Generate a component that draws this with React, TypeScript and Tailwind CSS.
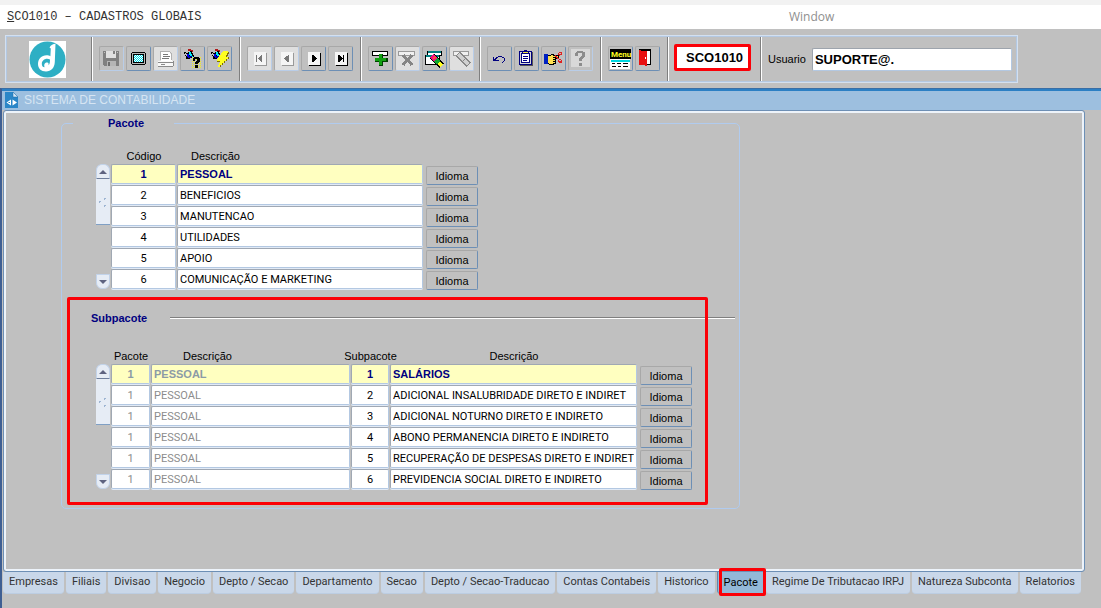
import type { ReactNode } from 'react'

const pacotes = ['PESSOAL', 'BENEFICIOS', 'MANUTENCAO', 'UTILIDADES', 'APOIO', 'COMUNICAÇÃO E MARKETING']

const subpacotes = [
  'SALÁRIOS',
  'ADICIONAL INSALUBRIDADE DIRETO E INDIRET',
  'ADICIONAL NOTURNO DIRETO E INDIRETO',
  'ABONO PERMANENCIA DIRETO E INDIRETO',
  'RECUPERAÇÃO DE DESPESAS DIRETO E INDIRET',
  'PREVIDENCIA SOCIAL DIRETO E INDIRETO',
]

const tabs = [
  'Empresas',
  'Filiais',
  'Divisao',
  'Negocio',
  'Depto / Secao',
  'Departamento',
  'Secao',
  'Depto / Secao-Traducao',
  'Contas Contabeis',
  'Historico',
  'Pacote',
  'Regime De Tributacao IRPJ',
  'Natureza Subconta',
  'Relatorios',
]

function Logo() {
  return (
    <svg viewBox="0 0 37 37" className="h-[37px] w-[37px] bg-white" aria-hidden="true">
      <circle cx="18.5" cy="18.5" r="18" fill="#2eafc4" />
      <path
        d="M20.500 6.500C22 4 24 3 26.500 2.800L25.800 21C25.500 27 22 30.500 17 30.500C12 30.500 9 27.500 9 23C9 18 12.500 14.200 17.500 14.200C19 14.200 20.500 14.600 21.400 15.200L21.800 7.500Z"
        fill="#fff"
      />
      <path
        d="M21 18.500C17 16.500 12.800 19 12.800 23C12.800 25 14 26.300 15.600 26.300C14.600 23.500 16 21.500 18.300 21.600C19.600 21.700 20 23 19.300 24.200C21 23.200 21 20.500 21 18.500Z"
        fill="#2eafc4"
      />
    </svg>
  )
}

function ToolButton({
  label,
  disabled = false,
  light = false,
  children,
}: {
  label: string
  disabled?: boolean
  light?: boolean
  children: ReactNode
}) {
  return (
    <button
      type="button"
      aria-label={label}
      disabled={disabled}
      className={`h-[25px] w-[25px] rounded-[2px] border border-t-[#a8a8a8] border-l-[#a8a8a8] ${
        disabled ? 'border-r-[#b9cde8] border-b-[#b9cde8]' : 'border-r-[#6d8fb5] border-b-[#6d8fb5]'
      } ${light ? 'bg-[#dfdfdf]' : 'bg-[#c0c0c0]'}`}
    >
      <svg viewBox="1 1 23 23" className="h-[23px] w-[23px]" shapeRendering="crispEdges" aria-hidden="true">
        {children}
      </svg>
    </button>
  )
}

function ToolGroup({ className = 'pr-[6px]', children }: { className?: string; children: ReactNode }) {
  return (
    <div
      className={`flex items-center gap-[2px] border-l border-[#7f7f7f] pb-px pl-[7px] shadow-[inset_1px_0_0_#fff] ${className}`}
    >
      {children}
    </div>
  )
}

function Torch() {
  return (
    <>
      <path d="M8 3h3v1h2v2h-2v-1h-3z" fill="#b01818" />
      <path d="M4 6h2v1h2v-1h2v-1h2v2h1v2h1v2h-2v1h-2v1h-4v-3h-1v-2h-1z" fill="#000" />
      <path d="M5 7h1v1h1v2h-1v-1h-1z" fill="#c0c0c0" />
      <path d="M7 8h2v4h-1v-1h-1z" fill="#0000e0" />
      <path d="M9 6h2v2h1v2h1v1h-3v-2h-1z" fill="#00e8f8" />
      <path d="M9 10h3v1h-1v1h-2z" fill="#0000a0" />
    </>
  )
}

function NavPage({ color, shadow, children }: { color: string; shadow: string; children: ReactNode }) {
  return (
    <>
      <rect x="8" y="7" width="12" height="13" fill={shadow} />
      <rect x="7" y="6" width="12" height="13" fill="#f5f5f5" />
      <g fill={color}>{children}</g>
    </>
  )
}

function Toolbar() {
  return (
    <div className="mt-[6px] ml-[5px] flex h-[48px] w-fit border-2 border-[#d3e0f0] outline-1 -outline-offset-2 outline-[#b3c8e2]">
      <div className="flex w-[84px] items-center justify-center pr-1">
        <Logo />
      </div>

      <ToolGroup className="pr-[7px]">
        <ToolButton label="Salvar" disabled>
          <path d="M4 5h16v15h-15v-1h-1z" fill="#808080" />
          <rect x="7" y="5" width="10" height="7" fill="#e0e0e0" />
          <rect x="14" y="5" width="2" height="3" fill="#808080" />
          <rect x="8" y="15" width="9" height="5" fill="#b5b5b5" />
          <rect x="9" y="16" width="2" height="4" fill="#6d6d6d" />
          <path d="M5 6h1v1h-1zM18 6h1v1h-1z" fill="#c0c0c0" />
        </ToolButton>
        <ToolButton label="Tela">
          <path d="M6 6h13v1h1v11h-1v1h-13v-1h-1v-11h1z" fill="#000" />
          <rect x="6" y="7" width="13" height="11" fill="#b8b8b8" />
          <rect x="7" y="8" width="11" height="9" fill="#000" />
          <rect x="8" y="9" width="9" height="7" fill="#fff" />
          <path d="M8 9.500h9M8 11.500h9M8 13.500h9M8 15.500h9" stroke="#00dce8" strokeDasharray="1 1" />
          <path d="M9 10.500h8M9 12.500h8M9 14.500h8" stroke="#00dce8" strokeDasharray="1 1" />
        </ToolButton>
        <ToolButton label="Imprimir" disabled light>
          <path d="M8 6h9v2h2v7h-11z" fill="#fff" />
          <path d="M7.500 14v-8.500h9l2 2v6.500" fill="none" stroke="#b0b0b0" />
          <path d="M10 8.500h5M10 10.500h7M9 12.500h7" stroke="#777" />
          <path d="M5 15h15v1h1v4h-16z" fill="#f8f8f8" />
          <path d="M5 16.500h16M5 20.500h15M20.500 15v5M8 18.500h4" stroke="#8a8a8a" />
        </ToolButton>
        <ToolButton label="Entrar consulta">
          <path
            d="M12 11.500h10M12 13.500h10M12 15.500h10M12 17.500h10M12 19.500h10M12 21.500h10"
            stroke="#f2ee20"
            strokeDasharray="1 1"
          />
          <Torch />
          <path d="M14 11h5v1h1v4h-1v1h-1v1h-3v-2h1v-1h1v-2h-2v2h-2v-3h1zM15 19h3v3h-3z" fill="#000" />
        </ToolButton>
        <ToolButton label="Executar consulta">
          <Torch />
          <path d="M16 6h6v2h-1v2h-1v1h2v2h-2v2h-2v2h-2v2h-2v2h-3v-2h1v-2h1v-1h-3v-3h1v-2h2v-2h1z" fill="#807000" />
          <path d="M16 5h5v2h-1v2h-1v2h2v2h-2v2h-2v2h-2v2h-2v2h-2v-2h1v-2h1v-2h-3v-2h1v-2h1v-2h2v-2h1z" fill="#ffff20" />
        </ToolButton>
      </ToolGroup>

      <ToolGroup className="pr-[7px]">
        <ToolButton label="Primeiro" disabled light>
          <NavPage color="#777" shadow="#999">
            <path d="M9 9h1v7h-1zM14 9h1v7h-1v-1h-1v-1h-1v-1h-1v-1h1v-1h1v-1h1z" />
          </NavPage>
        </ToolButton>
        <ToolButton label="Anterior" disabled light>
          <NavPage color="#777" shadow="#999">
            <path d="M14 9h1v7h-2v-1h-1v-1h-1v-1h-1v-1h1v-1h1v-1h2z" />
          </NavPage>
        </ToolButton>
        <ToolButton label="Proximo">
          <NavPage color="#000" shadow="#000">
            <path d="M11 9h2v1h1v1h1v1h1v1h-1v1h-1v1h-1v1h-2z" />
          </NavPage>
        </ToolButton>
        <ToolButton label="Ultimo">
          <NavPage color="#000" shadow="#000">
            <path d="M10 9h2v1h1v1h1v1h1v1h-1v1h-1v1h-1v1h-2zM15 9h1v7h-1z" />
          </NavPage>
        </ToolButton>
      </ToolGroup>

      <ToolGroup>
        <ToolButton label="Inserir">
          <path d="M4 5h16v5h-16z" fill="#000" />
          <path d="M5 6h14v3h-14z" fill="#fff" />
          <path d="M11 8h4v4h5v4h-5v4h-4v-4h-4v-4h4z" fill="#004000" />
          <path d="M11 8h3v4h4v3h-4v4h-3v-4h-4v-3h4z" fill="#10a010" />
        </ToolButton>
        <ToolButton label="Excluir" disabled light>
          <path d="M3.500 5.500h16v4h-16z" fill="#f0f0f0" stroke="#999" />
          <path d="M8 9L17 19M17 9L8 19" stroke="#858585" strokeWidth="3" />
        </ToolButton>
        <ToolButton label="Consultar">
          <path d="M5 5h15v5h-15zM3 9h15v10h-15z" fill="#000" />
          <path d="M6 5h13v2h-13zM4 9h13v2h-13z" fill="#008080" />
          <path d="M6 7h13v2h-13zM4 11h13v7h-13z" fill="#fff" />
          <path d="M10 10L20 20" stroke="#000" strokeWidth="7" />
          <path d="M10 10L14 14" stroke="#f01080" strokeWidth="5" />
          <path d="M13 11L11 13" stroke="#ff5030" strokeWidth="2" />
          <path d="M14 14L17 17" stroke="#10a830" strokeWidth="5" />
          <path d="M17 17L20 20" stroke="#ffff20" strokeWidth="4" />
        </ToolButton>
        <ToolButton label="Limpar" disabled light>
          <path d="M4.500 5.500h15v4h-15z" fill="#f0f0f0" stroke="#999" />
          <path d="M9 8L20 19" stroke="#888" strokeWidth="6" />
          <path d="M9.500 8.500L19.500 18.500" stroke="#d0d0d0" strokeWidth="3" />
          <path d="M16 13L13 16" stroke="#888" />
        </ToolButton>
      </ToolGroup>

      <ToolGroup className="-ml-px pr-[7px]">
        <ToolButton label="Desfazer">
          <path
            d="M6 11h1v2h1v-1h1v-1h2v-1h4v1h2v1h1v3h-1v1h-1v1h-1v-1h1v-1h1v-3h-2v-1h-4v1h-1v1h-1v1h3v1h-6z"
            fill="#000080"
          />
        </ToolButton>
        <ToolButton label="Colar">
          <path d="M6 6h13v14h-13z" fill="#555" />
          <path d="M5 5h13v14h-13z" fill="#000080" />
          <path d="M6 6h11v12h-11z" fill="#d8d8d8" />
          <path d="M7.500 7.500h8v9h-8z" fill="#fff" stroke="#000080" />
          <path d="M8 5h2v-1h3v1h2v3h-7z" fill="#000080" />
          <path d="M9 6h5v1h-5z" fill="#f2e840" />
          <path d="M9 10.500h5M9 12.500h5M9 14.500h4" stroke="#000080" />
        </ToolButton>
        <ToolButton label="Lista">
          <path d="M3 8h4v10h-4z" fill="#0020c0" />
          <path d="M7 9h3v-1h3v1h5v3h-2v1h-1v5h-2v1h-5v-1h-1z" fill="#000" />
          <path d="M7 10h3v-1h2v1h5v1h-5v7h-4v-1h-1z" fill="#ffe050" />
          <path d="M12 12h2v1h-2zM12 14h2v1h-2zM12 16h2v1h-2z" fill="#ffe050" />
          <path d="M18 6h3v3h-2v1h-1v-1h-1v-2h1zM18 13h2v1h1v3h-3v-1h-1v-2h1z" fill="#e02020" />
          <path d="M18 7h2v1h-2zM18 14h2v1h-2z" fill="#c0c0c0" />
          <path d="M14 9h1v1h1v1h1v1h1v1h-2v-1h-1v-1h-1z" fill="#e02020" />
        </ToolButton>
        <ToolButton label="Ajuda" disabled>
          <rect x="3" y="3" width="19" height="18" fill="#d8d8d8" />
          <path
            d="M9 5h6v1h2v5h-1v1h-1v1h-1v2h-3v-3h1v-1h1v-1h1v-3h-4v3h-3v-3h1v-1h1zM11 17h3v3h-3z"
            fill="#8c8c8c"
          />
        </ToolButton>
      </ToolGroup>

      <ToolGroup className="pr-[7px]">
        <ToolButton label="Abrir menu">
          <rect x="2" y="3" width="21" height="10" fill="#000" />
          <text x="3" y="11" fill="#ffff20" fontSize="8" fontWeight="bold" fontFamily="Roboto, sans-serif">
            Menu
          </text>
          <rect x="2" y="13" width="20" height="10" fill="#fff" />
          <rect x="3" y="14" width="19" height="2" fill="#00d8e0" />
          <path d="M4 17.500h3M9 17.500h4M15 17.500h5M4 20.500h4M10 20.500h3M15 20.500h5" stroke="#000" />
        </ToolButton>
        <ToolButton label="Sair">
          <path d="M4 3h12v16h-12z" fill="#000" />
          <path d="M12 5h3v13h-3z" fill="#fff" />
          <path d="M4 4h2v1h6v15h-2v-1h-6z" fill="#e81010" />
          <path d="M10 11h1v2h-1z" fill="#fff" />
        </ToolButton>
      </ToolGroup>

      <div className="flex items-start border-l border-[#7f7f7f] pt-[7px] pr-[9px] pl-[6px] shadow-[inset_1px_0_0_#fff]">
        <input
          aria-label="Programa"
          readOnly
          value="SCO1010"
          className="h-[27px] w-[77px] rounded-[2px] border-[3px] border-[#fb0007] bg-white pl-[9px] text-[13px] font-bold text-black"
        />
      </div>

      <div className="flex items-center gap-[6px] border-l border-[#7f7f7f] pr-1 pl-[7px] shadow-[inset_1px_0_0_#fff]">
        <label htmlFor="usuario" className="text-[11px]">
          Usuario
        </label>
        <input
          id="usuario"
          readOnly
          value="SUPORTE@."
          className="h-[23px] w-[200px] rounded-[2px] border border-[#b3c8e2] border-t-[#9da4ad] border-l-[#9da4ad] bg-white px-[2px] text-[13px] font-bold text-black"
        />
      </div>
    </div>
  )
}

function ScrollBar() {
  return (
    <div className="mt-[16px] mr-px flex h-[125px] w-[14px] flex-col">
      <button
        type="button"
        aria-label="Rolar para cima"
        className="flex h-[15px] items-center justify-center rounded-t-[6px] border border-[#c2d3ea] border-b-[#6f7f9c] bg-[#e6ecf5]"
      >
        <svg viewBox="0 0 8 4" className="h-1 w-2" aria-hidden="true">
          <path d="M4 0L8 4H0z" fill="#5e6380" />
        </svg>
      </button>
      <div className="flex h-[46px] items-center justify-center border-b border-[#7f9fc4] bg-[#e6ecf5]">
        <svg viewBox="0 0 8 10" className="h-[10px] w-2" aria-hidden="true">
          <path d="M5 1h2v1h-1v1h-1zM0 4h2v1h-1v1h-1zM5 8h2v1h-1v1h-1z" fill="#9db4d2" />
        </svg>
      </div>
      <button
        type="button"
        aria-label="Rolar para baixo"
        className="mt-auto flex h-[15px] items-center justify-center rounded-b-[6px] border border-[#c2d3ea] bg-[#e6ecf5]"
      >
        <svg viewBox="0 0 8 4" className="h-1 w-2" aria-hidden="true">
          <path d="M0 0H8L4 4z" fill="#5e6380" />
        </svg>
      </button>
    </div>
  )
}

function Cell({
  label,
  value,
  active,
  muted = false,
  className,
}: {
  label: string
  value: string
  active: boolean
  muted?: boolean
  className: string
}) {
  const look = active
    ? "bg-[#ffffc0] font-['Liberation_Sans',Arial,sans-serif] font-bold"
    : "bg-white font-['Roboto',Arial,sans-serif]"
  const activeColor = active ? 'text-[#000080]' : 'text-black'
  const mutedColor = active ? 'text-[#8c9ba6]' : 'text-[#8c8c8c]'

  return (
    <td className="h-[21px] p-0 pr-px align-top">
      <input
        aria-label={label}
        defaultValue={value}
        className={`block h-[20px] rounded-[2px] border border-t-[#a0a8b3] border-r-[#b3c8e2] border-b-[#b3c8e2] border-l-[#a0a8b3] text-[11px] shadow-[0_1px_0_#e1eaf6] ${look} ${
          muted ? mutedColor : activeColor
        } ${className}`}
      />
    </td>
  )
}

function IdiomaCell() {
  return (
    <td className="h-[21px] p-0 pt-[2px] pl-[2px] align-top">
      <button
        type="button"
        className="block h-[19px] w-[52px] rounded-[2px] border border-t-[#a8a8a8] border-r-[#6d8fb5] border-b-[#6d8fb5] border-l-[#a8a8a8] text-[11px] leading-4"
      >
        Idioma
      </button>
    </td>
  )
}

function PacoteTable() {
  return (
    <table className="border-separate border-spacing-0">
      <thead>
        <tr className="h-4 text-[11px] leading-4">
          <th className="p-0 text-center font-normal">Código</th>
          <th className="p-0 pl-[14px] text-left font-normal">Descrição</th>
          <th className="p-0" />
        </tr>
      </thead>
      <tbody>
        {pacotes.map((nome, i) => (
          <tr key={nome}>
            <Cell label="Código" value={String(i + 1)} active={i === 0} className="w-[65px] text-center" />
            <Cell label="Descrição" value={nome} active={i === 0} className="w-[246px] px-[2px]" />
            <IdiomaCell />
          </tr>
        ))}
      </tbody>
    </table>
  )
}

function SubpacoteTable() {
  return (
    <table className="border-separate border-spacing-0">
      <thead>
        <tr className="h-4 text-[11px] leading-4">
          <th className="p-0 text-center font-normal">Pacote</th>
          <th className="p-0 pl-8 text-left font-normal">Descrição</th>
          <th className="p-0 font-normal">
            <div className="-mx-2 text-center">Subpacote</div>
          </th>
          <th className="p-0 text-center font-normal">Descrição</th>
          <th className="p-0" />
        </tr>
      </thead>
      <tbody>
        {subpacotes.map((nome, i) => (
          <tr key={nome}>
            <Cell label="Pacote" value="1" active={i === 0} muted className="w-[39px] text-center" />
            <Cell label="Descrição do pacote" value="PESSOAL" active={i === 0} muted className="w-[199px] px-[2px]" />
            <Cell label="Subpacote" value={String(i + 1)} active={i === 0} className="w-[38px] text-center" />
            <Cell label="Descrição do subpacote" value={nome} active={i === 0} className="w-[247px] px-[2px]" />
            <IdiomaCell />
          </tr>
        ))}
      </tbody>
    </table>
  )
}

function TabBar() {
  return (
    <nav className="flex gap-[2px] font-['Roboto',Arial,sans-serif]">
      {tabs.map((tab) =>
        tab === 'Pacote' ? (
          <button
            key={tab}
            type="button"
            aria-current="page"
            className="relative h-[22px] rounded-b-[4px] border-l border-[#5f86b0] bg-[#93b8d8] px-[6px] text-[11px] whitespace-nowrap text-black"
          >
            {tab}
            <span className="absolute -top-[4px] -right-[2px] -bottom-[2px] left-px rounded-[2px] border-[3px] border-[#fb0007]" />
          </button>
        ) : (
          <button
            key={tab}
            type="button"
            className="h-[22px] rounded-b-[4px] border-b border-[#bccde2] bg-[#c9d7e9] px-[6px] text-[11px] whitespace-nowrap text-[#333]"
          >
            {tab}
          </button>
        ),
      )}
    </nav>
  )
}

export default function App() {
  return (
    <div className="flex min-h-screen flex-col bg-[#c0c0c0] font-['Liberation_Sans',Arial,sans-serif] text-black">
      <header className="flex h-[29px] items-center border-t-[5px] border-[#f2f2f2] bg-white pl-[7px]">
        <span className="w-[782px] font-['Liberation_Mono','Courier_New',monospace] text-[12px] text-[#333]">
          <span className="underline">S</span>CO1010 – CADASTROS GLOBAIS
        </span>
        <span className="font-['Open_Sans',sans-serif] text-[12px] text-[#8f8f8f]">Window</span>
      </header>

      <Toolbar />

      <main className="mt-[5px] flex flex-1 flex-col border-t border-l-2 border-t-[#3a6ea5] border-l-[#3f5f93] pb-[14px]">
        <div className="flex h-[21px] items-center gap-[5px] border-t-2 border-[#2b7fc4] bg-[#9dbfdf] pb-[2px] pl-[3px]">
          <svg viewBox="0 0 14 16" className="h-4 w-[14px]" aria-hidden="true">
            <path d="M0 0h8l5 5v11H0z" fill="#2b86c8" />
            <path d="M8 0v5h5z" fill="#d5e6f5" stroke="#1d6aa8" strokeWidth="0.5" />
            <path d="M6 7.500v6L1.500 10.500zM7.500 7.500v6L12 10.500z" fill="#fff" />
            <path d="M3.500 10.500h1.500" stroke="#2b86c8" />
          </svg>
          <h1 className="text-[12px] text-[#d6e5f3]">SISTEMA DE CONTABILIDADE</h1>
        </div>

        <div className="mr-4 ml-px flex flex-1 flex-col">
          <div className="flex-1 rounded-[3px] border border-[#6d8fb5] shadow-[inset_0_0_0_2px_#edf3fa]">
            <fieldset className="mt-[4px] ml-[57px] w-fit rounded-[5px] border border-[#b0cbef] pb-[3px]">
              <legend className="ml-[11px] w-[101px] pl-[35px] text-[11px] leading-4 font-bold text-[#000080]">Pacote</legend>

              <div className="flex pt-[17px] pl-[34px]">
                <ScrollBar />
                <PacoteTable />
              </div>

              <section className="relative mt-[7px] mr-[31px] ml-[5px] pt-[13px] pr-4 pb-[15px] pl-[3px]">
                <div className="-mr-[43px] flex items-center gap-[23px] pl-[21px]">
                  <h2 className="text-[11px] leading-4 font-bold text-[#000080]">Subpacote</h2>
                  <hr className="h-[2px] flex-1 border-t border-b border-t-[#7f7f7f] border-b-white" />
                </div>
                <div className="mt-[22px] flex pl-[26px]">
                  <ScrollBar />
                  <SubpacoteTable />
                </div>
                <span className="pointer-events-none absolute inset-0 rounded-[2px] border-[3px] border-[#fb0007]" />
              </section>
            </fieldset>
          </div>
          <TabBar />
        </div>
      </main>
    </div>
  )
}
